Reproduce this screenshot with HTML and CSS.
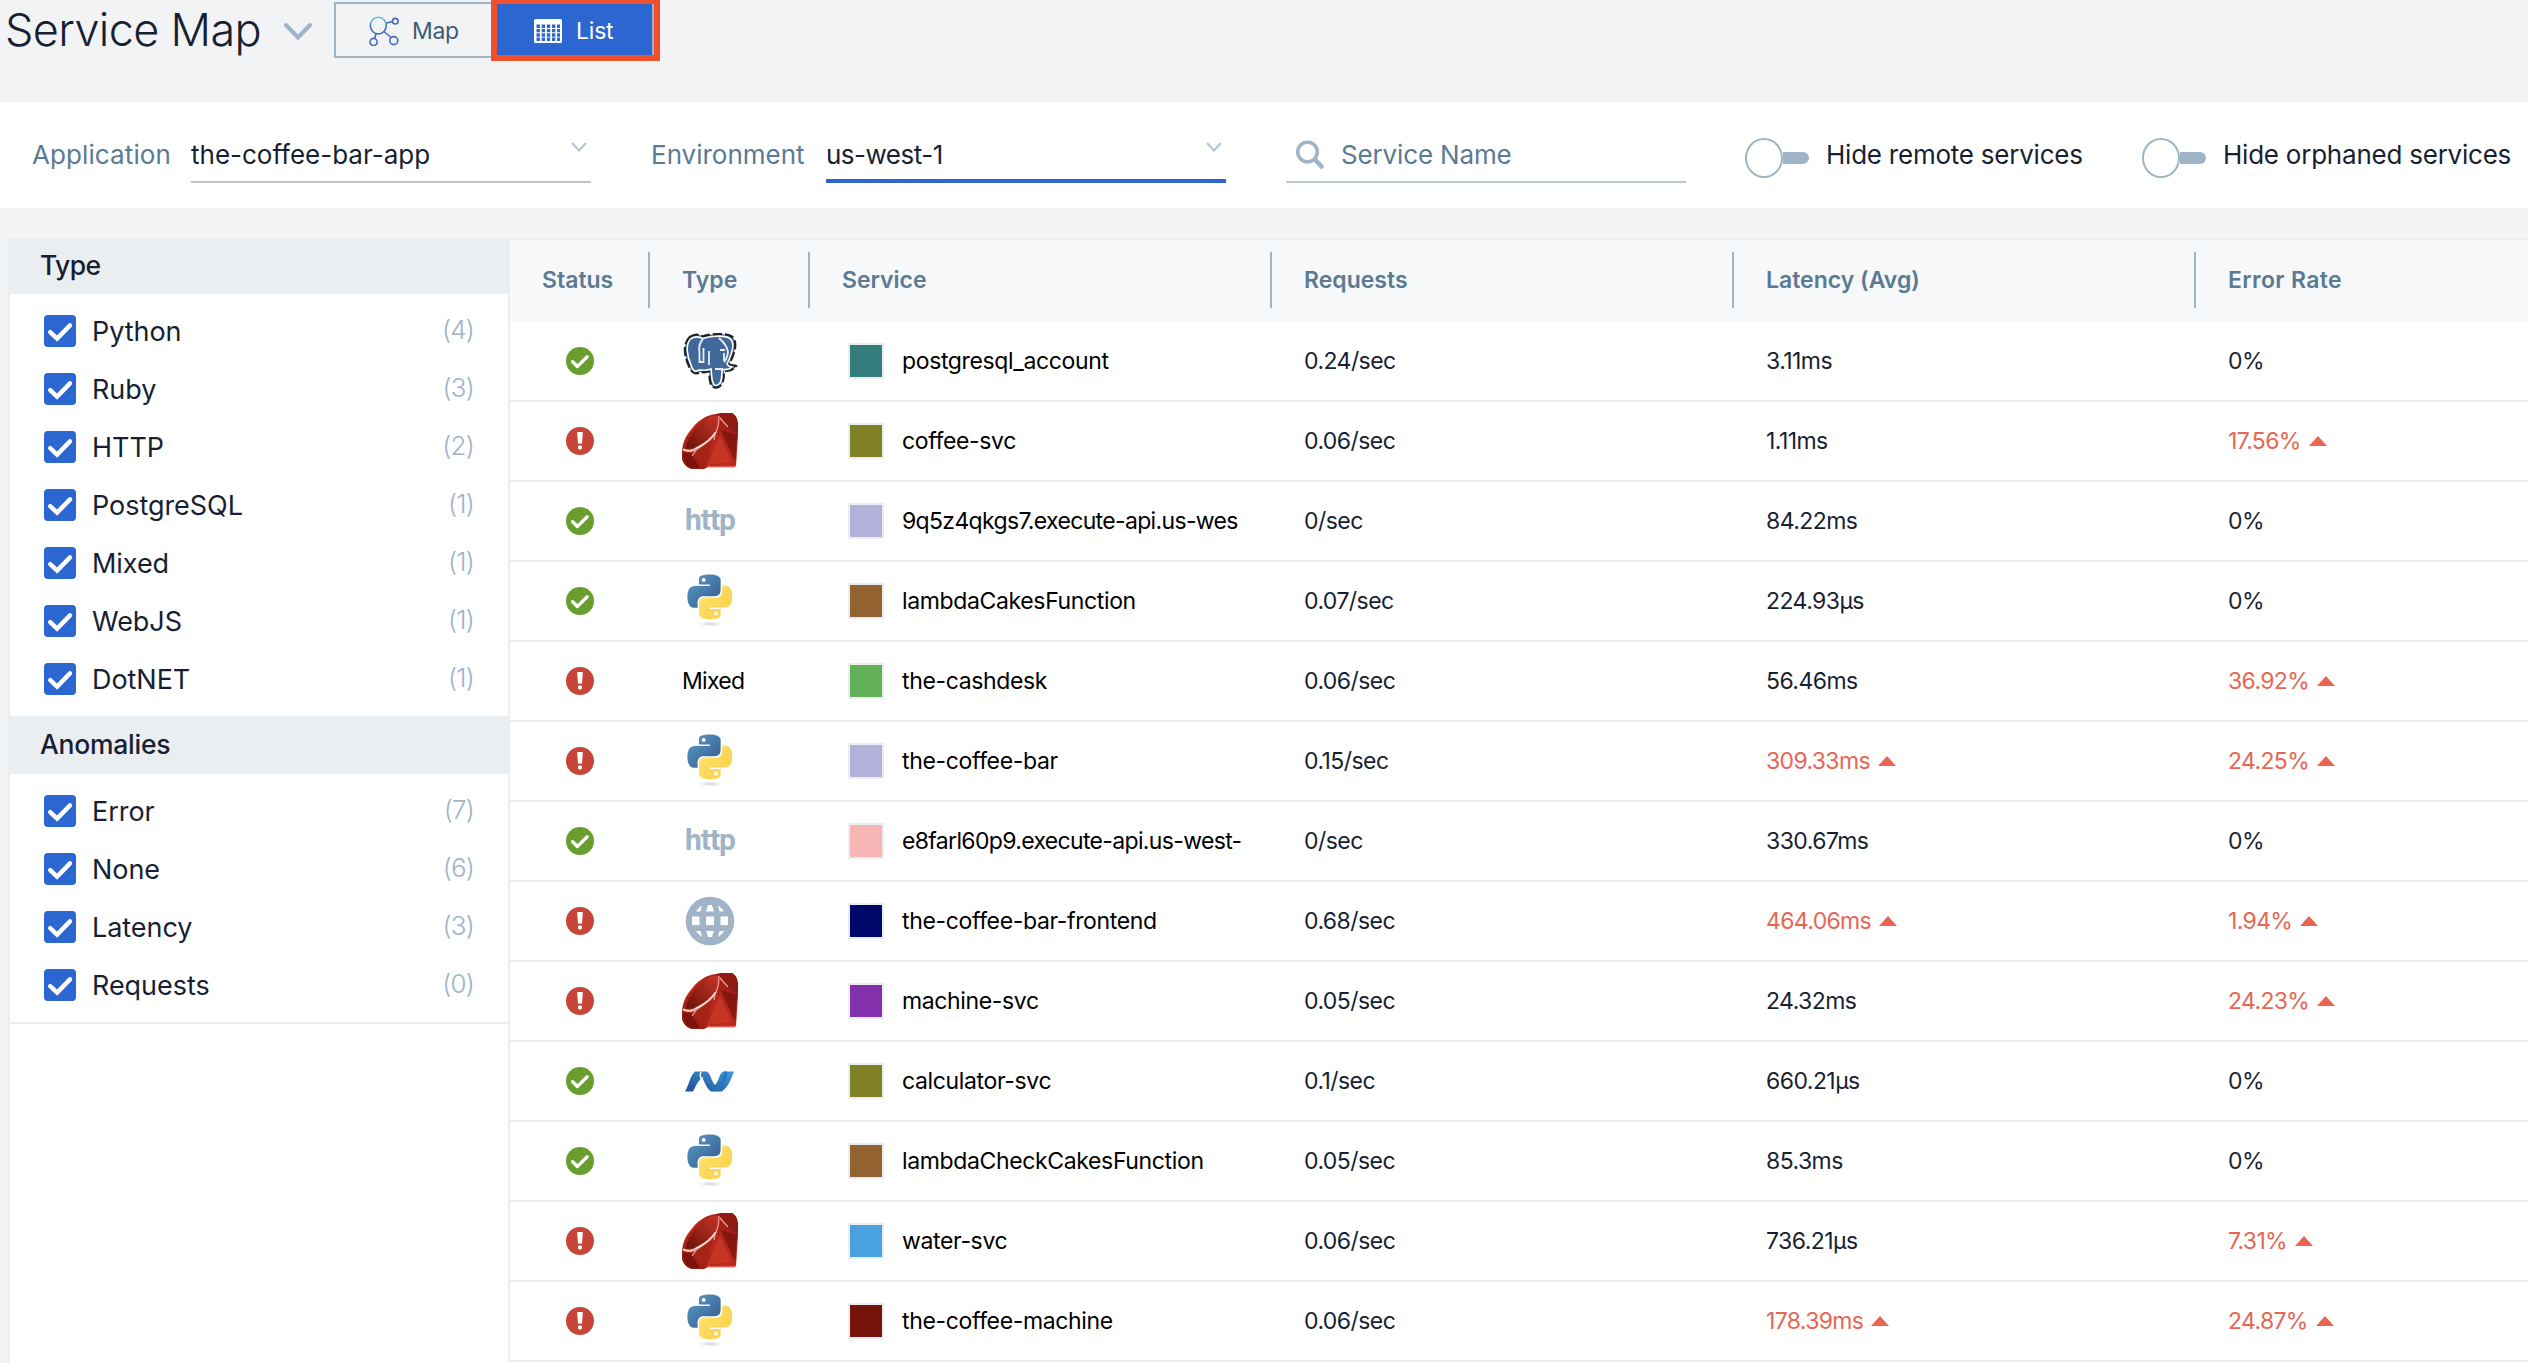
FILE: index.html
```html
<!DOCTYPE html>
<html lang="en">
<head>
<meta charset="utf-8">
<title>Service Map</title>
<link rel="stylesheet" href="styles.css">
</head>
<body>
<svg class="sprite" aria-hidden="true">
  <defs>
    <linearGradient id="py-blue" x1="0" y1="0" x2="1" y2="1"><stop offset="0" stop-color="#5c9bcd"/><stop offset="1" stop-color="#305a86"/></linearGradient>
    <linearGradient id="py-yellow" x1="0" y1="0" x2="1" y2="1"><stop offset="0" stop-color="#ffe56e"/><stop offset="1" stop-color="#fccb45"/></linearGradient>
    <radialGradient id="py-shadow"><stop offset="0" stop-color="#999" stop-opacity=".4"/><stop offset="1" stop-color="#999" stop-opacity="0"/></radialGradient>
    <linearGradient id="rb-body" x1="0" y1="1" x2="1" y2="0"><stop offset="0" stop-color="#8a1810"/><stop offset=".45" stop-color="#bd2a1c"/><stop offset="1" stop-color="#8c1a12"/></linearGradient>
    <linearGradient id="rb-top" x1="0" y1="1" x2="1" y2="0"><stop offset="0" stop-color="#6b120c"/><stop offset="1" stop-color="#c93424"/></linearGradient>
    <linearGradient id="net-a" x1="0" y1="1" x2="1" y2="0"><stop offset="0" stop-color="#1d4f94"/><stop offset="1" stop-color="#3d9bdc"/></linearGradient>
    <linearGradient id="map-ring" x1="0" y1="0" x2="0" y2="1"><stop offset="0" stop-color="#4cc8d8"/><stop offset=".3" stop-color="#5cb6d6"/><stop offset=".5" stop-color="#4a74c8"/><stop offset="1" stop-color="#3c63bd"/></linearGradient>
  </defs>
  <symbol id="i-check" viewBox="0 0 32 32"><path d="M6.2 17.2 13.1 23.6 26 10.4" fill="none" stroke="#fff" stroke-width="4.4" stroke-linecap="round"/></symbol>
  <symbol id="i-ok" viewBox="0 0 28 28"><circle cx="14" cy="14" r="14" fill="#699e2f"/><path d="M6.6 14.8 11.4 19.4 21.2 9.8" fill="none" stroke="#fff" stroke-width="3.4" stroke-linecap="round" stroke-linejoin="round"/></symbol>
  <symbol id="i-err" viewBox="0 0 28 28"><circle cx="14" cy="14" r="14" fill="#c64537"/><path d="M11.2 5.6Q11.2 5 12 5h4q.8 0 .8.6L16 16.6h-4Z" fill="#fff"/><rect x="12" y="18.4" width="4" height="4" rx="1.4" fill="#fff"/></symbol>
  <symbol id="i-python" viewBox="0 0 56 56">
    <ellipse cx="28.500" cy="51" rx="12" ry="2.600" fill="url(#py-shadow)"/>
    <g transform="translate(5.500 1.500) scale(1.86)">
      <path fill="url(#py-blue)" d="M14.250.18l.9.2.73.26.59.3.45.32.34.34.25.34.16.33.1.3.04.26.02.2-.01.13V8.500l-.05.63-.13.55-.21.46-.26.38-.3.31-.33.25-.35.19-.35.14-.33.1-.3.07-.26.04-.21.02H8.770l-.69.05-.59.14-.5.22-.41.27-.33.32-.27.35-.2.36-.15.37-.1.35-.07.32-.04.27-.02.21v3.060H3.170l-.21-.03-.28-.07-.32-.12-.35-.18-.36-.26-.36-.36-.35-.46-.32-.59-.28-.73-.21-.88-.14-1.050-.05-1.230.06-1.220.16-1.040.24-.87.32-.71.36-.57.4-.44.42-.33.42-.24.4-.16.36-.1.32-.05.24-.01h.16l.06.01h8.160v-.83H6.180l-.01-2.750-.02-.37.05-.34.11-.31.17-.28.25-.26.31-.23.38-.2.44-.18.51-.15.58-.12.64-.1.71-.06.77-.04.84-.02 1.270.05zm-6.300 1.980l-.23.33-.08.41.08.41.23.34.33.22.41.09.41-.09.33-.22.23-.34.08-.41-.08-.41-.23-.33-.33-.22-.41-.09-.41.09z"/>
      <path fill="url(#py-yellow)" d="M21.040 6.110l.28.06.32.12.35.18.36.27.36.35.35.47.32.59.28.73.21.88.14 1.040.05 1.230-.06 1.230-.16 1.040-.24.86-.32.71-.36.57-.4.45-.42.33-.42.24-.4.16-.36.09-.32.05-.24.02-.16-.01h-8.220v.82h5.840l.01 2.760.02.36-.05.34-.11.31-.17.29-.25.25-.31.24-.38.2-.44.17-.51.15-.58.13-.64.09-.71.07-.77.04-.84.01-1.270-.04-1.070-.14-.9-.2-.73-.25-.59-.3-.45-.33-.34-.34-.25-.34-.16-.33-.1-.3-.04-.25-.02-.2.01-.13v-5.340l.05-.64.13-.54.21-.46.26-.38.3-.32.33-.24.35-.2.35-.14.33-.1.3-.06.26-.04.21-.02.13-.01h5.840l.69-.05.59-.14.5-.21.41-.28.33-.32.27-.35.2-.36.15-.36.1-.35.07-.32.04-.28.02-.21V6.070h2.090l.14.01zm-6.470 14.250l-.23.33-.08.41.08.41.23.33.33.23.41.08.41-.08.33-.23.23-.33.08-.41-.08-.41-.23-.33-.33-.23-.41-.08-.41.08z"/>
    </g>
  </symbol>
  <symbol id="i-ruby" viewBox="0 0 56 56">
    <path fill="url(#rb-body)" d="M0 38 C1 30 3 24 8 18 C14 10 22 2 34 1 L38 0 H50 C54 2 56 6 56 12 V22 L54 53 L52 54 H26 L22 56 H10 C5 55 1 51 0 46Z"/>
    <path fill="url(#rb-top)" d="M4 35 C5 27 10 17 17 11 C24 4 31 2 36 3 C38 9 36 16 30 24 C23 32 14 38 4 35Z"/>
    <path fill="#8d1b13" d="M38 1 H50 C55 3 56 9 56 20 L44 14Z"/>
    <path fill="#cf3d2b" d="M38 22 L50 49 L25 52Z" opacity=".6"/>
    <path fill="#7a140e" d="M39 17 L55 22 L53 48Z" opacity=".8"/>
    <path fill="#a92418" d="M10 39 L32 25 L23 53Z"/>
    <path fill="#6f110c" d="M1 40 L9 40 L18 55 H10 Q2 52 1 40Z" opacity=".75"/>
    <path d="M1 36.500Q9 40 17 34Q28 28 34 19" fill="none" stroke="#f6d8d4" stroke-width="2.200"/>
    <path d="M34 19Q37 13 37 3M38 5 46 14M33 22 32 27M6 38 15 36 10 43" fill="none" stroke="#e9a69d" stroke-width="1.200"/>
    <path d="M25 53.500H53" stroke="#e0574a" stroke-width="1.600"/>
  </symbol>
  <symbol id="i-postgres" viewBox="0 0 56 56">
    <path d="M8 4 C12 1 17 1 21 3.500 C26 1 44 0 49 3 C57 8 52 22 47 31 C49 33 51 32 54 33 C53 36 48 38 42 38 C42 45 41 50 38 53 C36 55 32 55 30 53 C27 49 28 43 27 38 C24 40 20 39 18 39 C14 42 9 39 7 33 C3 25 0 11 8 4Z" fill="#40699a" stroke="#222" stroke-width="2.400" stroke-dasharray="9 3"/>
    <path d="M9 5.500 C13 3 17 3.500 21 5.500 C27 3 42 2 47 5 C54 9 50 21 45 31 C46 33 49 34 50 34 C48 36 44 37 40 36.500 C40 44 40 49 37 51 C35 53 33 53 31.500 51 C29 46 30 41 29 36 C25 38 20 37 17 37 C13 40 10 37 9 32 C5 23 3 11 9 5.500Z" fill="#40699a" stroke="#fff" stroke-width="1.600"/>
    <path d="M21 6Q16 11 17.500 20V30M21.500 15V29H18M27 18V32M37 5Q45 12 46 19Q45 26 42 29M38 17h5M42 20v8M33 36h8" fill="none" stroke="#e8eef5" stroke-width="1.800"/>
  </symbol>
  <symbol id="i-globe" viewBox="0 0 56 56">
    <circle cx="28" cy="28" r="24.300" fill="#a1b4c7"/>
    <g fill="#fff"><rect x="10" y="23.500" width="7.500" height="8.600"/><rect x="24" y="23.500" width="8" height="8.600"/><rect x="38.500" y="23.500" width="7.500" height="8.600"/><path d="M26.200 12h3.600L32 18.500h-8zM26.200 44h3.600L32 38h-8zM20 12.500 18.500 18.500H14Q16 15 20 12.500ZM36 12.500 37.500 18.500H42Q40 15 36 12.500ZM20 44 18.500 38H14Q16 41.500 20 44ZM36 44 37.500 38H42Q40 41.500 36 44Z"/></g>
  </symbol>
  <symbol id="i-net" viewBox="0 0 56 56">
    <path d="M3 38.500 C7 32 8 23 13 18.500 H25 C29 21 29 28 33 32 C37 28 37 21 41 18.500 H52 C49 26 47 33 40 38.500 H29 C24 35 23 29 20 25 C17 29 15 35 11 38.500Z" fill="url(#net-a)"/>
    <path d="M19 18.500Q17 25 20 25Q15 31 12 38" stroke="#fff" stroke-width="1.400" fill="none"/>
    <path d="M44 18.500Q42 30 34 38" stroke="#2c74b8" stroke-width="2.500" fill="none"/>
  </symbol>
</svg>

<header class="topbar">
  <h1 class="title">Service Map</h1>
  <svg class="title-caret" viewBox="0 0 28 20"><path d="M2 3 14 15.500 26 3" fill="none" stroke="#a0b4c7" stroke-width="4" stroke-linecap="round"/></svg>
  <div class="views">
    <button class="view">
      <svg width="30" height="30" viewBox="0 0 30 30" fill="none" stroke="#4468c4" stroke-width="1.600">
        <ellipse cx="9.300" cy="9.600" rx="8" ry="8.400" stroke="url(#map-ring)"/><circle cx="26.300" cy="5.200" r="2.800"/><circle cx="24.800" cy="24.600" r="4"/><circle cx="4.600" cy="26" r="3.600"/><path d="M17.300 7.300 23.500 5.600M15 15.500 22 21.500M7 17.800 5.600 22.400"/>
      </svg>
      <span>Map</span>
    </button>
    <div class="highlight"><button class="view active">
      <svg width="28" height="24" viewBox="0 0 28 24"><rect width="28" height="24" rx="1.500" fill="#fff"/>
        <g stroke="#2c66d0" stroke-width="3.400" stroke-dasharray="3.400 1.750"><path d="M2.500 7.200h23.500M2.500 11.600h23.500M2.500 16h23.500M2.500 20.200h23.500"/></g></svg>
      <span>List</span>
    </button></div>
  </div>
</header>

<section class="filters">
  <div class="field app"><label>Application</label><div class="select"><span>the-coffee-bar-app</span><svg viewBox="0 0 16 10"><path d="M1 1 8 8.500 15 1" fill="none" stroke="#b4c3d1" stroke-width="2"/></svg></div></div>
  <div class="field env"><label>Environment</label><div class="select focus"><span>us-west-1</span><svg viewBox="0 0 16 10"><path d="M1 1 8 8.500 15 1" fill="none" stroke="#b4c3d1" stroke-width="2"/></svg></div></div>
  <div class="search"><svg viewBox="0 0 28 30"><circle cx="11.500" cy="12" r="9.800" fill="none" stroke="#a0b4c7" stroke-width="3.600"/><path d="M19 19.500 25.500 26.500" stroke="#a0b4c7" stroke-width="4.500" stroke-linecap="round"/></svg><span>Service Name</span></div>
  <div class="toggle remote"><i class="switch"></i><span>Hide remote services</span></div>
  <div class="toggle orphaned"><i class="switch"></i><span>Hide orphaned services</span></div>
</section>

<main class="panel">
  <aside class="sidebar">
    <h2 class="first">Type</h2>
    <ul>
      <li><svg class="box"><use href="#i-check"/></svg><span>Python</span><em>(4)</em></li>
      <li><svg class="box"><use href="#i-check"/></svg><span>Ruby</span><em>(3)</em></li>
      <li><svg class="box"><use href="#i-check"/></svg><span>HTTP</span><em>(2)</em></li>
      <li><svg class="box"><use href="#i-check"/></svg><span>PostgreSQL</span><em>(1)</em></li>
      <li><svg class="box"><use href="#i-check"/></svg><span>Mixed</span><em>(1)</em></li>
      <li><svg class="box"><use href="#i-check"/></svg><span>WebJS</span><em>(1)</em></li>
      <li><svg class="box"><use href="#i-check"/></svg><span>DotNET</span><em>(1)</em></li>
    </ul>
    <h2>Anomalies</h2>
    <ul class="last">
      <li><svg class="box"><use href="#i-check"/></svg><span>Error</span><em>(7)</em></li>
      <li><svg class="box"><use href="#i-check"/></svg><span>None</span><em>(6)</em></li>
      <li><svg class="box"><use href="#i-check"/></svg><span>Latency</span><em>(3)</em></li>
      <li><svg class="box"><use href="#i-check"/></svg><span>Requests</span><em>(0)</em></li>
    </ul>
  </aside>

  <div class="table">
    <div class="row head"><div>Status</div><div>Type</div><div>Service</div><div>Requests</div><div>Latency (Avg)</div><div>Error Rate</div></div>
    <div class="row"><div class="status"><svg><use href="#i-ok"/></svg></div><div class="type"><svg><use href="#i-postgres"/></svg></div><div class="service"><i class="c-teal"></i><span>postgresql_account</span></div><div>0.24/sec</div><div>3.11ms</div><div>0%</div></div>
    <div class="row"><div class="status"><svg><use href="#i-err"/></svg></div><div class="type"><svg><use href="#i-ruby"/></svg></div><div class="service"><i class="c-olive"></i><span>coffee-svc</span></div><div>0.06/sec</div><div>1.11ms</div><div class="up">17.56%</div></div>
    <div class="row"><div class="status"><svg><use href="#i-ok"/></svg></div><div class="type"><b>http</b></div><div class="service long"><i class="c-lilac"></i><span>9q5z4qkgs7.execute-api.us-wes</span></div><div>0/sec</div><div>84.22ms</div><div>0%</div></div>
    <div class="row"><div class="status"><svg><use href="#i-ok"/></svg></div><div class="type"><svg><use href="#i-python"/></svg></div><div class="service"><i class="c-brown"></i><span>lambdaCakesFunction</span></div><div>0.07/sec</div><div>224.93µs</div><div>0%</div></div>
    <div class="row"><div class="status"><svg><use href="#i-err"/></svg></div><div class="type">Mixed</div><div class="service"><i class="c-green"></i><span>the-cashdesk</span></div><div>0.06/sec</div><div>56.46ms</div><div class="up">36.92%</div></div>
    <div class="row"><div class="status"><svg><use href="#i-err"/></svg></div><div class="type"><svg><use href="#i-python"/></svg></div><div class="service"><i class="c-lilac"></i><span>the-coffee-bar</span></div><div>0.15/sec</div><div class="up">309.33ms</div><div class="up">24.25%</div></div>
    <div class="row"><div class="status"><svg><use href="#i-ok"/></svg></div><div class="type"><b>http</b></div><div class="service long"><i class="c-pink"></i><span>e8farl60p9.execute-api.us-west-</span></div><div>0/sec</div><div>330.67ms</div><div>0%</div></div>
    <div class="row"><div class="status"><svg><use href="#i-err"/></svg></div><div class="type"><svg><use href="#i-globe"/></svg></div><div class="service"><i class="c-navy"></i><span>the-coffee-bar-frontend</span></div><div>0.68/sec</div><div class="up">464.06ms</div><div class="up">1.94%</div></div>
    <div class="row"><div class="status"><svg><use href="#i-err"/></svg></div><div class="type"><svg><use href="#i-ruby"/></svg></div><div class="service"><i class="c-purple"></i><span>machine-svc</span></div><div>0.05/sec</div><div>24.32ms</div><div class="up">24.23%</div></div>
    <div class="row"><div class="status"><svg><use href="#i-ok"/></svg></div><div class="type"><svg><use href="#i-net"/></svg></div><div class="service"><i class="c-olive"></i><span>calculator-svc</span></div><div>0.1/sec</div><div>660.21µs</div><div>0%</div></div>
    <div class="row"><div class="status"><svg><use href="#i-ok"/></svg></div><div class="type"><svg><use href="#i-python"/></svg></div><div class="service"><i class="c-brown"></i><span>lambdaCheckCakesFunction</span></div><div>0.05/sec</div><div>85.3ms</div><div>0%</div></div>
    <div class="row"><div class="status"><svg><use href="#i-err"/></svg></div><div class="type"><svg><use href="#i-ruby"/></svg></div><div class="service"><i class="c-blue"></i><span>water-svc</span></div><div>0.06/sec</div><div>736.21µs</div><div class="up">7.31%</div></div>
    <div class="row"><div class="status"><svg><use href="#i-err"/></svg></div><div class="type"><svg><use href="#i-python"/></svg></div><div class="service"><i class="c-maroon"></i><span>the-coffee-machine</span></div><div>0.06/sec</div><div class="up">178.39ms</div><div class="up">24.87%</div></div>
  </div>
</main>
</body>
</html>
```
FILE: styles.css
```css
* { box-sizing: border-box; }
html, body { height: 100%; }
body {
  margin: 0;
  overflow: hidden;
  background: #f2f3f5;
  color: #181f33;
  font: 400 23px/1 Inter, "Liberation Sans", sans-serif;
  font-feature-settings: "calt" 0;
}
svg { display: block; flex: none; }
.sprite { width: 0; height: 0; overflow: hidden; position: absolute; }

/* Top bar */
.topbar { display: flex; align-items: flex-start; height: 102px; }
.title { margin: 0 0 0 5px; width: 279px; font-size: 45px; font-weight: 350; line-height: 60px; letter-spacing: -.65px; white-space: nowrap; }
.title-caret { width: 28px; height: 20px; margin-top: 22px; }
.views { display: flex; margin-left: 22px; }
.view {
  display: flex; align-items: center;
  width: 158px; height: 56px; margin-top: 2px; padding: 2px 0 0 33px; gap: 13px;
  border: 2px solid #a0b4c7; border-right: 0; background: none;
  color: #3f5b73; font: inherit; letter-spacing: -.4px;
}
.highlight { width: 169px; height: 61px; margin-left: -1px; border: 6px solid #f0502d; border-top-width: 4px; }
.view.active {
  width: 157px; height: 51px; margin: 0; padding: 3px 0 0 37px; gap: 14px;
  border: 0; border-right: 2px solid #a0b4c7; background: #2c66d0; color: #fff; letter-spacing: -.2px;
}

/* Filters */
.filters { display: flex; align-items: center; height: 106px; padding: 0 0 1px 32px; background: #fff; font-size: 26px; letter-spacing: -.15px; white-space: nowrap; }
.field { display: flex; align-items: center; color: #5b7a94; }
.app label { width: 159px; letter-spacing: .1px; }
.env { margin-left: 60px; }
.env label { width: 175px; letter-spacing: 0; }
.select { display: flex; align-items: flex-start; justify-content: space-between; width: 400px; height: 57px; padding: 16px 4px 0 0; border-bottom: 2px solid #b5c5d5; color: #181f33; }
.app .select { letter-spacing: 0; }
.select svg { width: 16px; height: 10px; margin-top: 0; }
.select.focus { border-bottom: 4px solid #2c66d0; letter-spacing: -.5px; }
.search { display: flex; align-items: center; gap: 17px; width: 400px; height: 57px; margin-left: 60px; padding-left: 10px; border-bottom: 2px solid #b5c8d8; color: #5b7a94; letter-spacing: -.15px; }
.search svg { width: 28px; height: 30px; margin-top: 2px; }
.search span { margin-top: 2px; }
.toggle { display: flex; align-items: center; letter-spacing: -.23px; }
.remote { width: 337px; margin-left: 59px; }
.orphaned { margin-left: 60px; }
.switch { display: flex; align-items: center; width: 64px; height: 36px; margin: 7px 17px 0 0; }
.switch::before { content: ""; width: 36px; height: 36px; border: 2px solid #a0b4c7; border-radius: 50%; background: #fff; }
.switch::after { content: ""; width: 28px; height: 12px; border-radius: 0 6px 6px 0; background: #a0b4c7; }

/* Panel */
.panel { display: flex; margin: 30px 0 0 8px; height: 1125px; border: 2px solid #ebeef1; border-width: 2px 0 0 2px; background: #fff; }
.sidebar { width: 500px; border-right: 2px solid #ebeef1; font-size: 27px; }
.sidebar h2 { display: flex; align-items: center; height: 58px; margin: 0; padding: 0 0 1px 30px; background: #ebeef1; font-size: 26.500px; font-weight: 550; letter-spacing: -.25px; }
.sidebar h2.first { height: 54px; padding-bottom: 4px; letter-spacing: -.6px; }
.sidebar ul { margin: 0; padding: 8px 34px 8px 34px; list-style: none; }
.sidebar ul.last { border-bottom: 2px solid #ebeef1; }
.sidebar li { display: flex; align-items: center; height: 58px; }
.sidebar li span { flex: 1; margin: 1px 0 0 16px; letter-spacing: -.05px; }
.sidebar em { font-style: normal; font-weight: 350; font-size: 26px; letter-spacing: -.8px; margin-top: -2px; color: #a0b4c7; }
.box { width: 32px; height: 32px; border-radius: 4px; background: #2c66d0; }

/* Services table */
.table { flex: 1; }
.row { display: grid; grid-template-columns: 140px 160px 462px 462px 462px 1fr; align-items: center; height: 80px; border-bottom: 2px solid #ebeef1; letter-spacing: -.55px; }
.row > div { display: flex; align-items: center; height: 56px; padding-left: 32px; }
.row.head { height: 82px; padding-bottom: 2px; border: 0; background: #f6f8fa; color: #5b7a94; font-weight: 600; letter-spacing: 0; }
.row.head > div { border-right: 2px solid #a0b4c7; padding-left: 32px; }
.row.head > div:last-child { border: 0; letter-spacing: .35px; }
.row > div.status { justify-content: center; padding: 0; }
.status svg { width: 28px; height: 28px; }
.row > div.type { padding-left: 32px; color: #000; letter-spacing: -.7px; }
.type svg { width: 56px; height: 56px; }
.type b { margin: -3px 0 0 3px; color: #a1b4c7; font: 700 30px/1 Roboto, sans-serif; letter-spacing: -1px; }
.row > div.service { padding: 0 30px 0 38px; color: #000; letter-spacing: -.36px; }
.row > div.long { letter-spacing: -.66px; }
.service i { flex: none; width: 36px; height: 36px; border: 2px solid #ebeef1; }
.service span { flex: 1; margin-left: 18px; white-space: nowrap; line-height: 36px; }
.row > div.up { color: #e96553; letter-spacing: -.65px; }
.up::after { content: ""; margin-left: 8px; border: 9px solid transparent; border-top: 0; border-bottom: 10.500px solid #e96553; }

.c-teal { background: #357d7c; }
.c-olive { background: #808026; }
.c-lilac { background: #b4b1db; }
.c-brown { background: #926331; }
.c-green { background: #62b058; }
.c-pink { background: #f6b6b6; }
.c-navy { background: #00076b; }
.c-purple { background: #8330ac; }
.c-blue { background: #4aa1e0; }
.c-maroon { background: #75120a; }
```
